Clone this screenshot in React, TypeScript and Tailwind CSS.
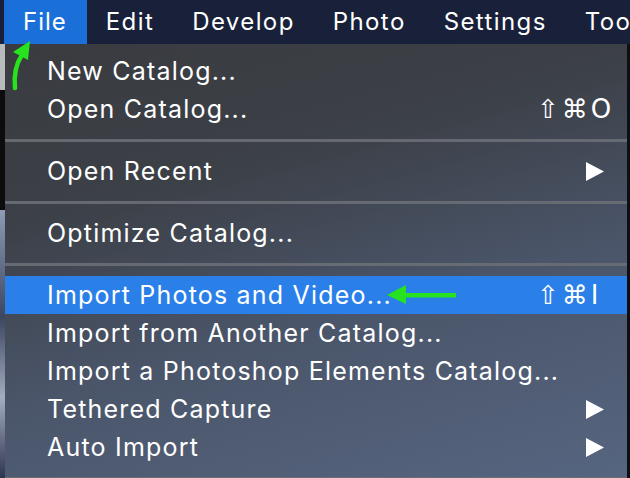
import React from 'react';

type Item =
  | { kind: 'item'; label: string; shortcut?: string; submenu?: boolean; active?: boolean }
  | { kind: 'sep' };

const items: Item[] = [
  { kind: 'item', label: 'New Catalog...' },
  { kind: 'item', label: 'Open Catalog...', shortcut: '⇧⌘O' },
  { kind: 'sep' },
  { kind: 'item', label: 'Open Recent', submenu: true },
  { kind: 'sep' },
  { kind: 'item', label: 'Optimize Catalog...' },
  { kind: 'sep' },
  { kind: 'item', label: 'Import Photos and Video...', shortcut: '⇧⌘I', active: true },
  { kind: 'item', label: 'Import from Another Catalog...' },
  { kind: 'item', label: 'Import a Photoshop Elements Catalog...' },
  { kind: 'item', label: 'Tethered Capture', submenu: true },
  { kind: 'item', label: 'Auto Import', submenu: true },
  { kind: 'sep' },
];

const menus = ['Edit', 'Develop', 'Photo', 'Settings', 'Tools'];

function Triangle() {
  return (
    <svg width="18" height="19" viewBox="0 0 18 19" className="ml-auto">
      <polygon points="0,0 18,9.5 0,19" fill="#ffffff" />
    </svg>
  );
}

export default function App() {
  return (
    <div
      className="relative w-[630px] h-[478px] overflow-hidden bg-[#111318] text-white"
      style={{ fontFamily: 'Inter, "DejaVu Sans", sans-serif' }}
    >
      {/* menu bar */}
      <div className="flex h-[44px] bg-[#19213a] text-[24px] leading-none tracking-[1.4px] whitespace-nowrap">
        <div className="w-[4px] shrink-0" />
        <div className="flex items-center bg-[#1b6fd9] pl-[19px] pr-[20px] shrink-0 tracking-[1px]">File</div>
        <div className="flex items-center gap-[38px] pl-[19px]">
          {menus.map((m) => (
            <span key={m}>{m}</span>
          ))}
        </div>
      </div>

      <div className="flex h-[434px]">
        {/* photo strip on the left */}
        <div className="w-[5px] flex flex-col">
          <div className="h-[46px] bg-[#b9babb]" />
          <div className="h-[120px] bg-[#0c0c0d]" />
          <div className="flex-1 bg-[linear-gradient(180deg,#8e9bb4,#3b4660_40%,#a4acc0_70%,#2d3550)]" />
        </div>

        {/* dropdown */}
        <div className="w-[622px] pt-[8px] bg-[linear-gradient(165deg,#393b3f_0%,#3c4047_30%,#4a5569_60%,#566580_100%)] text-[25px] leading-none tracking-[1.2px]">
          {items.map((it, i) =>
            it.kind === 'sep' ? (
              <div key={i} className="h-[24px] flex items-center">
                <div className="h-[3px] w-full bg-[#6a6e75]/90" />
              </div>
            ) : (
              <div
                key={i}
                className={`h-[38px] flex items-center pl-[42px] pr-[23px] ${it.active ? 'bg-[#2a7fe9]' : ''}`}
              >
                <span className="whitespace-nowrap">{it.label}</span>
                {it.shortcut && (
                  <span
                    className="ml-auto w-[73px] -mr-[6px] whitespace-nowrap text-[26px] tracking-[3px]"
                    style={{ fontFamily: '"DejaVu Sans", sans-serif' }}
                  >
                    {it.shortcut}
                  </span>
                )}
                {it.submenu && <Triangle />}
              </div>
            )
          )}
        </div>

        <div className="flex-1 bg-[#0d0f14]" />
      </div>

      {/* green annotation arrows */}
      <svg className="absolute left-0 top-0" width="630" height="478" viewBox="0 0 630 478">
        <path d="M15 88 Q13 68 22 55" stroke="#27e21f" strokeWidth="4.5" fill="none" strokeLinecap="round" />
        <polygon points="30,41 13,52 28,60" fill="#27e21f" />
        <rect x="402" y="293" width="54" height="4.5" fill="#27e21f" />
        <polygon points="387,295 406,285 406,304" fill="#27e21f" />
      </svg>
    </div>
  );
}
